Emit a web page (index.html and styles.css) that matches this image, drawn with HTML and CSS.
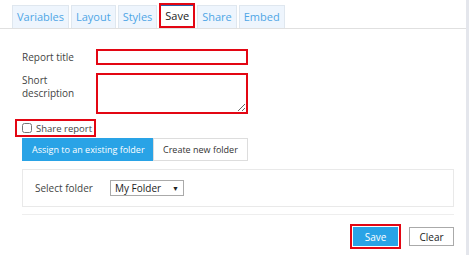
FILE: index.html
```html
<!DOCTYPE html>
<html lang="en">
<head>
    <meta charset="UTF-8">
    <title>Report - Save</title>
    <link rel="stylesheet" href="styles.css">
</head>
<body>
    <div class="page">
        <div class="tabs">
            <a class="tab" href="#">Variables</a>
            <a class="tab" href="#">Layout</a>
            <a class="tab" href="#">Styles</a>
            <a class="tab active" href="#">Save</a>
            <a class="tab" href="#">Share</a>
            <a class="tab" href="#">Embed</a>
        </div>

        <div class="form">
            <div class="row first">
                <label for="title">Report title</label>
                <input type="text" id="title" class="marked">
            </div>
            <div class="row">
                <label for="desc">Short description</label>
                <textarea id="desc" class="marked"></textarea>
            </div>

            <label class="share">
                <input type="checkbox"> Share report
            </label>

            <div class="btn-group">
                <button class="seg selected">Assign to an existing folder</button>
                <button class="seg">Create new folder</button>
            </div>

            <div class="panel">
                <span class="panel-label">Select folder</span>
                <div class="select">
                    <span>My Folder</span>
                    <span class="caret">&#9660;</span>
                </div>
            </div>

            <div class="actions">
                <div class="save-mark"><button class="btn primary">Save</button></div>
                <button class="btn">Clear</button>
            </div>
        </div>
    </div>
</body>
</html>
```

FILE: styles.css
```css
body {
    margin: 0;
    font-family: "Open Sans", Arial, sans-serif;
    color: #444;
    background: white;
}
.page {
    width: 466px;
    min-height: 255px;
    border-right: 3px solid #e4e6ec;
}
.tabs {
    display: flex;
    gap: 2px;
    padding: 4px 0 0 12px;
    border-bottom: 1px solid #e0e0e0;
    height: 24px;
}
.tab {
    display: block;
    height: 23px;
    line-height: 22px;
    padding: 0 4px;
    font-size: 11px;
    text-decoration: none;
    color: #4ea6e6;
    background: #eef5fd;
    border: 1px solid #dfe7ef;
    border-bottom: none;
    box-sizing: border-box;
    margin-top: 1px;
}
.tab.active {
    height: 25px;
    margin-top: -1px;
    color: #222;
    background: white;
    border: 2px solid #e30613;
    box-shadow: inset 0 1px 0 #2a5fa8;
    line-height: 21px;
    padding: 0 4px;
}
.form {
    padding: 0 12px 0 22px;
    font-size: 10px;
}
.row {
    display: flex;
    align-items: flex-start;
}
.row.first {
    margin-top: 20px;
    align-items: center;
}
.row + .row {
    margin-top: 8px;
}
.row label {
    width: 74px;
    line-height: 13px;
    padding-top: 1px;
}
.row.first label {
    padding-top: 0;
}
.row input,
.row textarea {
    width: 152px;
    border: 2px solid #e30613;
    box-sizing: border-box;
    margin: 0;
    font-family: inherit;
}
.row input {
    height: 16px;
}
.row textarea {
    height: 41px;
    resize: vertical;
}
.share {
    display: flex;
    align-items: center;
    gap: 4px;
    width: 81px;
    height: 18px;
    box-sizing: border-box;
    margin: 5px 0 0 -7px;
    padding-left: 5px;
    border: 2px solid #e30613;
    font-size: 9.5px;
    white-space: nowrap;
}
.share input {
    margin: 0;
    width: 10px;
    height: 10px;
}
.btn-group {
    display: flex;
    margin-top: 1px;
}
.seg {
    height: 23px;
    font-family: inherit;
    font-size: 9px;
    padding: 0 9px;
    border: 1px solid #ddd;
    background: white;
    color: #333;
    white-space: nowrap;
}
.seg.selected {
    width: 131px;
    background: #29a3e6;
    border-color: #29a3e6;
    color: white;
}
.panel {
    display: flex;
    align-items: center;
    margin-top: 8px;
    height: 38px;
    border: 1px solid #e9e9e9;
    box-sizing: border-box;
    padding-left: 12px;
}
.panel-label {
    width: 75px;
}
.select {
    display: flex;
    justify-content: space-between;
    align-items: center;
    width: 74px;
    height: 16px;
    box-sizing: border-box;
    padding: 0 4px;
    border: 1px solid #aaa;
    font-size: 10px;
    color: #222;
}
.caret {
    font-size: 7px;
}
.actions {
    display: flex;
    justify-content: flex-end;
    align-items: center;
    gap: 8px;
    margin-top: 7px;
    padding-top: 9px;
    border-top: 1px solid #eee;
}
.save-mark {
    border: 2px solid #e30613;
    padding: 1px;
}
.btn {
    height: 19px;
    width: 45px;
    font-family: inherit;
    font-size: 10px;
    border: 1px solid #aaa;
    background: white;
    color: #222;
    padding: 0;
}
.btn.primary {
    background: #29a3e6;
    border-color: #29a3e6;
    color: white;
    display: block;
}
```
